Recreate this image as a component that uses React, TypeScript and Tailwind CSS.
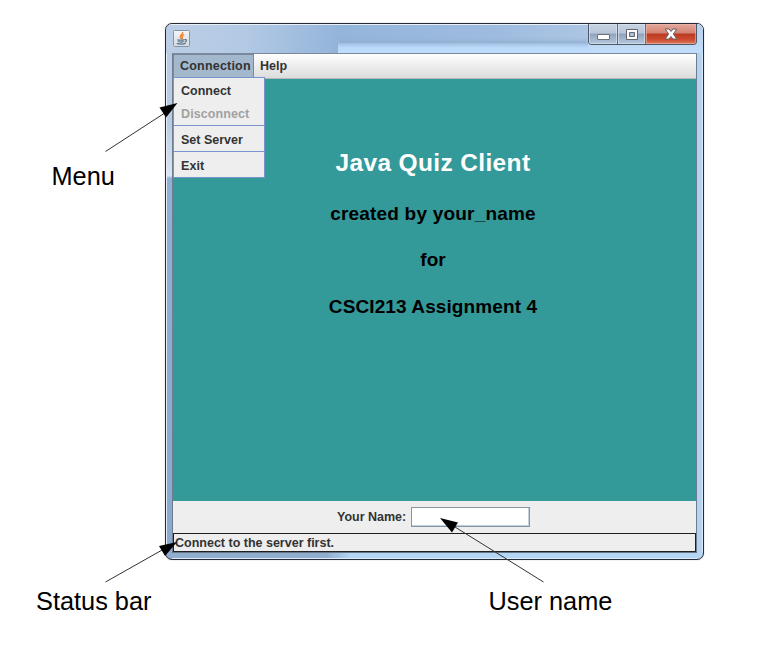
import type { ReactNode } from "react";

const ui = "font-['Liberation_Sans',Arial,sans-serif]";

function JavaIcon() {
  return (
    <svg width="17" height="17" viewBox="0 0 17 17" className="block">
      <defs>
        <linearGradient id="javaTile" x1="0" y1="0" x2="0" y2="1">
          <stop offset="0" stopColor="#f4f6f8" />
          <stop offset="1" stopColor="#d3dae1" />
        </linearGradient>
      </defs>
      <rect x="0.5" y="0.5" width="16" height="16" rx="1" fill="url(#javaTile)" stroke="#8496a8" />
      <path d="M9.7 2C10.5 4 6.4 5.2 7.4 7.2C7.8 8 8.3 8.3 8.1 9.1M11.2 4.6C8.6 5.6 8.8 6.5 9.3 7.3C9.6 8 9.2 8.6 8.8 9" fill="none" stroke="#ee8535" strokeWidth="1.5" />
      <path d="M4.3 9.7C5.5 10.4 9.5 10.4 11.5 9.6M5 11.5C6.8 12.1 9.3 12.1 10.7 11.5M11.8 9.6C14.4 9 14 11.6 11.6 12M3.8 13.4C5.7 14.4 10.5 14.4 12.8 13.3" fill="none" stroke="#58758f" strokeWidth="1.2" />
    </svg>
  );
}

function WindowButtons() {
  return (
    <div className="flex h-[21px] w-[109px] overflow-hidden rounded-b-[4px] border border-t-0 border-[#4b5868]">
      <div className="flex w-[29px] items-center justify-center border-r border-[#5f6d80] bg-[linear-gradient(#c7d3e2_0%,#b8c6d8_45%,#91a3bb_50%,#b4c7dd_100%)] pt-0.5 shadow-[inset_0_0_0_1px_#dce6f1aa]">
        <svg width="15" height="11" viewBox="0 0 15 11">
          <rect x="1.5" y="4.5" width="12" height="5" rx="0.5" fill="#fff" stroke="#69727d" />
        </svg>
      </div>
      <div className="flex w-7 items-center justify-center border-r border-[#5f6d80] bg-[linear-gradient(#c7d3e2_0%,#b8c6d8_45%,#91a3bb_50%,#b4c7dd_100%)] shadow-[inset_0_0_0_1px_#dce6f1aa]">
        <svg width="14" height="11" viewBox="0 0 14 11">
          <path d="M1.5.5H12.5V10.5H1.5Z" fill="#fff" stroke="#65656f" />
          <path d="M4.5 3.5H9.5V7.5H4.5Z" fill="#aebfd6" stroke="#65656f" />
        </svg>
      </div>
      <div className="flex flex-1 items-center justify-center bg-[linear-gradient(#e2a99d_0%,#d58372_45%,#b93a22_50%,#cf4d31_80%,#dc8063_100%)] shadow-[inset_0_0_0_1px_#efbaae99]">
        <svg width="14" height="12" viewBox="0 0 14 12">
          <path d="M1.3 1H5L7 3.5L9 1H12.7L9.4 6L12.7 11H9L7 8.5L5 11H1.3L4.6 6Z" fill="#fff" stroke="#65616b" strokeLinejoin="round" />
        </svg>
      </div>
    </div>
  );
}

function MenuItem({ children, className }: { children: ReactNode; className: string }) {
  return <div className={"flex items-center pl-[7px] " + className}>{children}</div>;
}

function ConnectionMenu() {
  return (
    <div className="absolute top-[23px] left-0 w-[92px] border border-[#7a93cc] bg-[#eeeeee] tracking-[0.1px]">
      <MenuItem className="h-[25px] pt-0.5 tracking-normal">Connect</MenuItem>
      <MenuItem className="h-[22px] text-[#a1a1a1]">Disconnect</MenuItem>
      <MenuItem className="h-[27px] border-y border-[#7a93cc] pt-[3px] pl-2 tracking-normal">Set Server</MenuItem>
      <MenuItem className="h-[25px] pt-1">Exit</MenuItem>
    </div>
  );
}

function QuizWindow() {
  return (
    <div className="mt-[23px] ml-[165px] flex h-[537px] w-[539px] flex-col overflow-hidden rounded-[7px] border border-[#252b36] bg-[linear-gradient(90deg,#90add0_0px,#90add0_160px,#b5d5f5_185px,#b5d5f5_100%)] shadow-[0_0_1px_#777]">
      <div className="flex h-[29px] shrink-0 justify-between border-t border-[#e8eff7] bg-[linear-gradient(100deg,#bccee6_0%,#b3c9e4_15%,#94b5da_32%,#9dbbdf_60%,#aec6e3_80%,#c8dcf1_100%)]">
        <div className="flex w-[172px] shrink-0 pt-[5px] pl-[7px]">
          <JavaIcon />
        </div>
        <div className="mt-[18px] h-[10px] min-w-0 flex-1 bg-[linear-gradient(#a0bddc_0%,#bad8fa_45%,#c0ddfb_100%)] shadow-[0_-2px_4px_#8faed0]" />
        <div className="-mt-px w-[115px] shrink-0 bg-[linear-gradient(#b9d0ea_0px,#c0daf6_22px,#c0ddfb_100%)]">
          <WindowButtons />
        </div>
      </div>
      <div className="flex min-h-0 flex-1">
        <div className="w-[6px] shrink-0 border-l border-[#e5edf7] bg-[linear-gradient(#bacce4_0px,#b8cce5_70px,#dae5f2_123px,#91b0d5_125px,#8aa9d0_100%)]" />
        <div className="flex min-w-0 flex-1 flex-col border-x border-t border-x-[#6d7d8c] border-t-[#7c899b]">
          <div className="relative flex h-[25px] shrink-0 border-b border-[#b8b8b8] bg-[linear-gradient(#ffffff,#dcdcdc)] text-[12.5px] leading-[15px] font-bold tracking-[0.2px] text-[#333333]">
            <div className="flex h-6 w-[81px] shrink-0 items-center border border-[#7888a0] bg-[#a3b8cc] pl-[6px]">Connection</div>
            <div className="flex h-6 items-center pl-[6px] tracking-normal">Help</div>
            <ConnectionMenu />
          </div>
          <div className="flex h-[422px] shrink-0 flex-col items-center bg-[#339999] pt-[69px] pr-[3px] font-bold text-black">
            <h1 className="text-[24.5px] leading-[30px] tracking-[0.35px] whitespace-nowrap text-white">Java Quiz Client</h1>
            <p className="mt-[25px] text-[19px] leading-[22px] tracking-[0.2px]">created by your_name</p>
            <p className="mt-6 text-[19px] leading-[22px]">for</p>
            <p className="mt-[25px] text-[19px] leading-[22px] tracking-[0.1px]">CSCI213 Assignment 4</p>
          </div>
          <div className="flex h-8 shrink-0 items-center bg-[#eeeeee] pl-[164px] text-[12.5px] font-bold text-[#333333]">
            <span className="w-[74px] whitespace-nowrap">Your Name:</span>
            <span className="h-5 w-[119px] border border-[#8495a8] bg-white shadow-[inset_-1px_-1px_#c3d1df]" />
          </div>
          <div className="flex h-[19px] shrink-0 items-center border border-[#1d2020] bg-[#eeeeee] pt-0.5 pl-px text-[12.5px] font-bold text-[#333333]">Connect to the server first.</div>
        </div>
        <div className="w-[6px] shrink-0 border-r border-[#dceafa] bg-[#b5d3f4]" />
      </div>
      <div className="mx-[6px] h-[7px] shrink-0 border-t border-b border-t-[#667487] border-b-[#dceafa]" />
    </div>
  );
}

function Callouts() {
  return (
    <svg width="766" height="655" viewBox="0 0 766 655" className="pointer-events-none absolute inset-0">
      <g stroke="#333" strokeWidth="1">
        <path d="M105.5 151.5L164 113.5" />
        <path d="M105.5 582L163 549.5" />
        <path d="M543.5 582L455 527" />
      </g>
      <g fill="#000">
        <path d="M177.5 103L159.5 107.5L166 117.5Z" />
        <path d="M177 542L159 546L165 556Z" />
        <path d="M440 518L458 522.5L452 532.5Z" />
      </g>
    </svg>
  );
}

export default function App() {
  return (
    <main className={"relative flex h-[655px] w-[766px] items-start overflow-hidden bg-white " + ui}>
      <QuizWindow />
      <Callouts />
      <span className="absolute top-[162px] left-[51.5px] text-[25.33px] leading-[29px] text-black">Menu</span>
      <span className="absolute top-[587px] left-[36px] text-[25.33px] leading-[29px] text-black">Status bar</span>
      <span className="absolute top-[587px] left-[488.5px] text-[25.33px] leading-[29px] text-black">User name</span>
    </main>
  );
}
